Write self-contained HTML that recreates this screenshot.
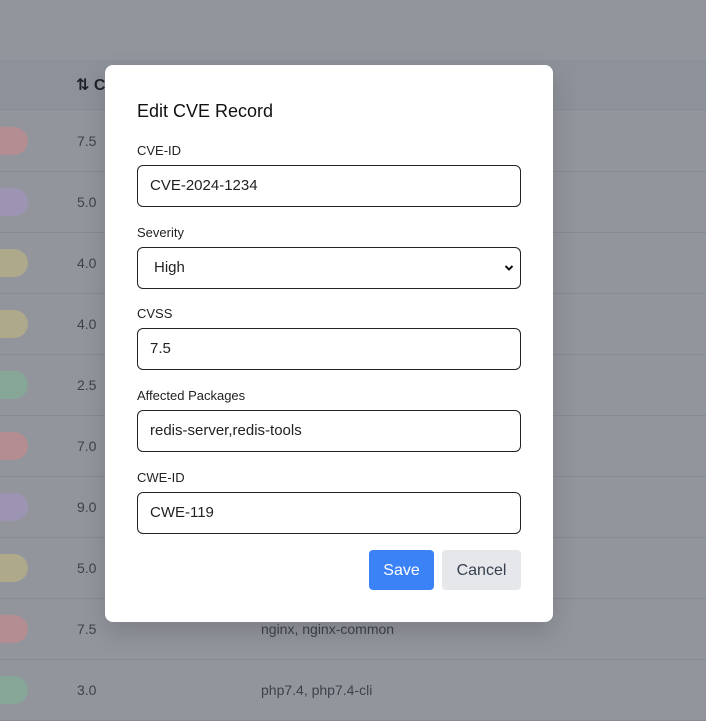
<!DOCTYPE html>
<html><head><style>
*{box-sizing:border-box;margin:0;padding:0}
body{width:706px;height:704px;overflow:hidden;background:#92959c;font-family:"Segoe UI","Liberation Sans","DejaVu Sans",sans-serif;position:relative}
.hdr{position:absolute;left:0;top:60px;width:706px;height:50px;background:#8d9199;border-bottom:1px solid #868a92}
.row{position:absolute;left:0;width:706px;height:61px;border-bottom:1px solid #868a92}
.pill{position:absolute;left:-30px;top:16px;width:58px;height:28px;border-radius:14px}
.num{position:absolute;left:77px;top:22px;font-size:14px;color:#3e424a;font-family:"Liberation Sans",sans-serif}
.pk{position:absolute;left:261px;top:22px;font-size:14px;color:#3e424a;font-family:"Liberation Sans",sans-serif}
.modal{position:absolute;left:105px;top:65px;width:448px;height:557px;background:#fff;border-radius:8px;box-shadow:0 10px 25px rgba(0,0,0,.15)}
h2{position:absolute;left:32px;top:36px;font-size:18px;font-weight:500;color:#111}
.lbl{position:absolute;left:32px;font-size:13px;font-weight:500;color:#222}
.inp{position:absolute;left:32px;width:384px;height:42px;border:1px solid #222;border-radius:6px;font-size:15px;color:#222;padding:11px 12px 0;font-family:"Liberation Sans",sans-serif}
.btn{position:absolute;top:485px;height:40px;border-radius:4px;font-size:16px;text-align:center;line-height:41px}
</style></head><body>
<div class="hdr"><div style="position:absolute;left:76px;top:15px;font-size:16px;font-weight:700;color:#1f2329">⇅ C</div></div>
<div class="row" style="top:111px"><div class="pill" style="background:#b48d93"></div><div class="num">7.5</div></div>
<div class="row" style="top:172px"><div class="pill" style="background:#9d94b4"></div><div class="num">5.0</div></div>
<div class="row" style="top:233px"><div class="pill" style="background:#ada98a"></div><div class="num">4.0</div></div>
<div class="row" style="top:294px"><div class="pill" style="background:#ada98a"></div><div class="num">4.0</div></div>
<div class="row" style="top:355px"><div class="pill" style="background:#86a797"></div><div class="num">2.5</div></div>
<div class="row" style="top:416px"><div class="pill" style="background:#b48d93"></div><div class="num">7.0</div></div>
<div class="row" style="top:477px"><div class="pill" style="background:#9d94b4"></div><div class="num">9.0</div></div>
<div class="row" style="top:538px"><div class="pill" style="background:#ada98a"></div><div class="num">5.0</div></div>
<div class="row" style="top:599px"><div class="pill" style="background:#b48d93"></div><div class="num">7.5</div><div class="pk">nginx, nginx-common</div></div>
<div class="row" style="top:660px"><div class="pill" style="background:#86a797"></div><div class="num">3.0</div><div class="pk">php7.4, php7.4-cli</div></div>
<div class="modal">
<h2>Edit CVE Record</h2>
<div class="lbl" style="top:78px">CVE-ID</div>
<div class="inp" style="top:100px">CVE-2024-1234</div>
<div class="lbl" style="top:160px">Severity</div>
<div class="inp" style="top:182px;padding-left:16px">High<svg style="position:absolute;right:6px;top:16px" width="10" height="8" viewBox="0 0 10 8"><path d="M1.5 2l3.5 3.5L8.5 2" stroke="#111" stroke-width="2" fill="none"/></svg></div>
<div class="lbl" style="top:241px">CVSS</div>
<div class="inp" style="top:263px">7.5</div>
<div class="lbl" style="top:323px">Affected Packages</div>
<div class="inp" style="top:345px">redis-server,redis-tools</div>
<div class="lbl" style="top:405px">CWE-ID</div>
<div class="inp" style="top:427px">CWE-119</div>
<div class="btn" style="left:264px;width:65px;background:#3b82f6;color:#fff">Save</div>
<div class="btn" style="left:337px;width:79px;background:#e5e7eb;color:#374151">Cancel</div>
</div>
</body></html>
